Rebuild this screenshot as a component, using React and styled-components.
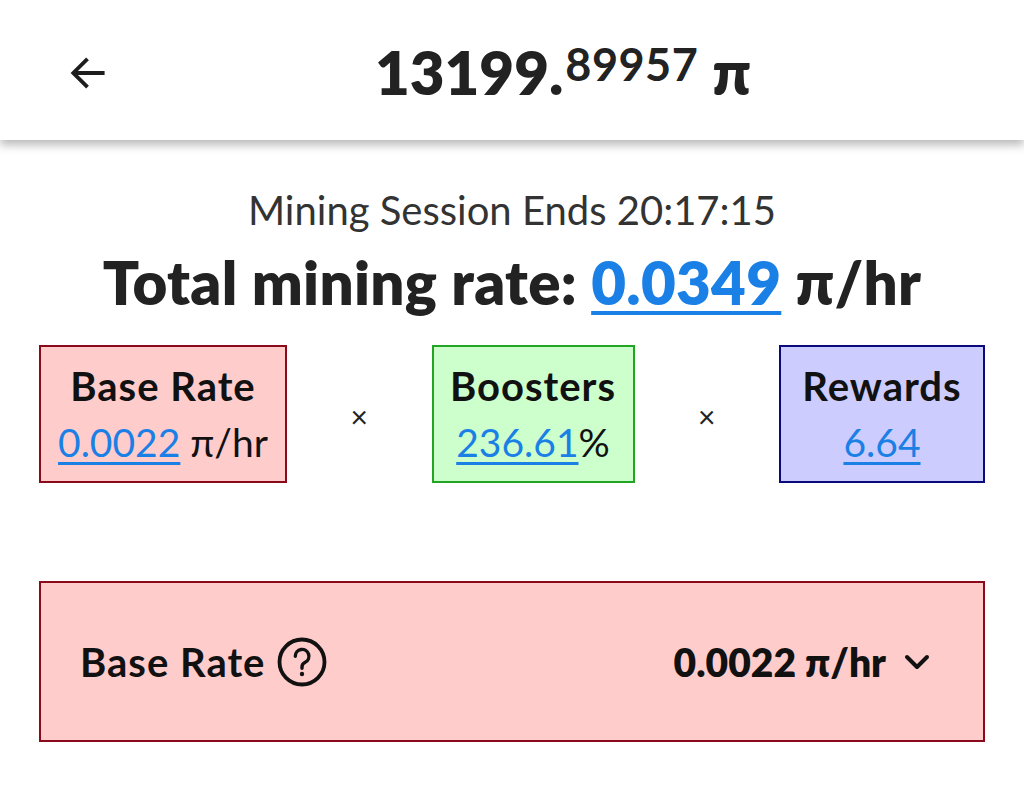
import React from "react";
import styled, { createGlobalStyle } from "styled-components";

const Global = createGlobalStyle`
  html, body { margin: 0; padding: 0; background: #fff; }
  body { font-family: Lato, "Noto Sans", "Liberation Sans", sans-serif; color: #1d1d1d; }
  * { box-sizing: border-box; }
`;

const Page = styled.div`
  width: 1024px;
  min-height: 796px;
  background: #fff;
`;

const Header = styled.header`
  height: 140px;
  display: flex;
  align-items: center;
  background: #fff;
  box-shadow: 0 5px 9px rgba(0, 0, 0, 0.28);
  position: relative;
  z-index: 1;
`;

const BackButton = styled.button`
  flex: none;
  margin-left: 62px;
  width: 52px;
  height: 48px;
  border: 0;
  background: transparent;
  padding: 0;
  display: flex;
  align-items: center;
  justify-content: center;
  color: #1d1d1d;
  position: relative;
  top: 3px;
`;

const Balance = styled.h1`
  flex: 1;
  margin: 0;
  padding-right: 12px;
  text-align: center;
  font-size: 60px;
  font-weight: 800;
  color: #222;
  line-height: 1;
  white-space: nowrap;
  position: relative;
  top: 2px;
`;

const Decimals = styled.span`
  font-size: 45px;
  font-weight: 700;
  position: relative;
  top: -14px;
  margin-left: 2px;
  letter-spacing: 0.5px;
`;

const PiMark = styled.span`
  margin-left: 14px;
`;

const Content = styled.main`
  padding: 44px 39px 0;
  display: flex;
  flex-direction: column;
  align-items: stretch;
`;

const Session = styled.div`
  text-align: center;
  font-size: 40px;
  font-weight: 400;
  color: #333;
  line-height: 52px;
`;

const TotalRate = styled.div`
  text-align: center;
  font-size: 60px;
  font-weight: 800;
  color: #222;
  line-height: 76px;
  margin-top: 8px;
  letter-spacing: 0.3px;
`;

const Link = styled.a`
  color: #1a80e6;
  text-decoration: underline;
  text-decoration-thickness: ${(p) => p.$thick || 2}px;
  text-underline-offset: ${(p) => p.$offset || 4}px;
  cursor: pointer;
`;

const Factors = styled.div`
  margin-top: 25px;
  display: flex;
  align-items: center;
  justify-content: space-between;
`;

const FactorBox = styled.div`
  width: ${(p) => p.$w}px;
  height: 138px;
  background: ${(p) => p.$bg};
  border: 2px solid ${(p) => p.$border};
  display: flex;
  flex-direction: column;
  align-items: center;
  justify-content: center;
  gap: 8px;
`;

const FactorTitle = styled.div`
  font-size: 40px;
  font-weight: 700;
  color: #111;
  line-height: 48px;
  letter-spacing: 1px;
`;

const FactorValue = styled.div`
  font-size: 39px;
  font-weight: 400;
  color: #111;
  line-height: 48px;
`;

const Times = styled.span`
  font-size: 30px;
  color: #222;
  font-weight: 400;
  position: relative;
  top: 2px;
`;

const Breakdown = styled.section`
  margin-top: 98px;
  height: 161px;
  background: #ffcccc;
  border: 2px solid #8a0a1c;
  display: flex;
  align-items: center;
  justify-content: space-between;
  padding: 0 53px 0 39px;
`;

const BreakdownLabel = styled.div`
  display: flex;
  align-items: center;
  gap: 11px;
  font-size: 40px;
  font-weight: 700;
  color: #111;
  letter-spacing: 1px;
`;

const BreakdownValue = styled.div`
  display: flex;
  align-items: center;
  gap: 18px;
  font-size: 39px;
  font-weight: 800;
  color: #111;
`;

const ArrowLeft = () => (
  <svg width="44" height="44" viewBox="0 0 24 24" fill="none">
    <path d="M20 12H4.5M11 5l-7 7 7 7" stroke="#1d1d1d" strokeWidth="2.1" strokeLinecap="square" />
  </svg>
);

const HelpIcon = () => (
  <svg width="52" height="52" viewBox="0 0 52 52" fill="none">
    <circle cx="26" cy="26" r="22.5" stroke="#111" strokeWidth="3.8" />
    <path d="M19.3 20.3a6.8 6.8 0 1 1 9.9 6c-2.1 1.1-3.2 2.4-3.2 4.6v1.4" stroke="#111" strokeWidth="3.4" strokeLinecap="round" fill="none" />
    <circle cx="26" cy="38" r="2.2" fill="#111" />
  </svg>
);

const ChevronDown = () => (
  <svg width="26" height="20" viewBox="0 0 26 20" fill="none">
    <path d="M3 5l10 10L23 5" stroke="#111" strokeWidth="4" strokeLinecap="round" strokeLinejoin="round" />
  </svg>
);

const factors = [
  { title: "Base Rate", w: 248, bg: "#ffcccc", border: "#8a0a1c", value: "0.0022", suffix: " π/hr" },
  { title: "Boosters", w: 203, bg: "#ccffcc", border: "#22a522", value: "236.61", suffix: "%" },
  { title: "Rewards", w: 206, bg: "#ccccff", border: "#0a0a7a", value: "6.64", suffix: "" },
];

export default function App() {
  return (
    <Page>
      <Global />
      <Header>
        <BackButton aria-label="Back">
          <ArrowLeft />
        </BackButton>
        <Balance>
          13199.<Decimals>89957</Decimals>
          <PiMark>π</PiMark>
        </Balance>
      </Header>
      <Content>
        <Session>Mining Session Ends 20:17:15</Session>
        <TotalRate>
          Total mining rate: <Link $thick={4} $offset={6}>0.0349</Link> π/hr
        </TotalRate>
        <Factors>
          {factors.map((f, i) => (
            <React.Fragment key={f.title}>
              {i > 0 && <Times>×</Times>}
              <FactorBox $w={f.w} $bg={f.bg} $border={f.border}>
                <FactorTitle>{f.title}</FactorTitle>
                <FactorValue>
                  <Link $thick={3} $offset={5}>{f.value}</Link>
                  {f.suffix}
                </FactorValue>
              </FactorBox>
            </React.Fragment>
          ))}
        </Factors>
        <Breakdown>
          <BreakdownLabel>
            Base Rate
            <HelpIcon />
          </BreakdownLabel>
          <BreakdownValue>
            0.0022 π/hr
            <ChevronDown />
          </BreakdownValue>
        </Breakdown>
      </Content>
    </Page>
  );
}
